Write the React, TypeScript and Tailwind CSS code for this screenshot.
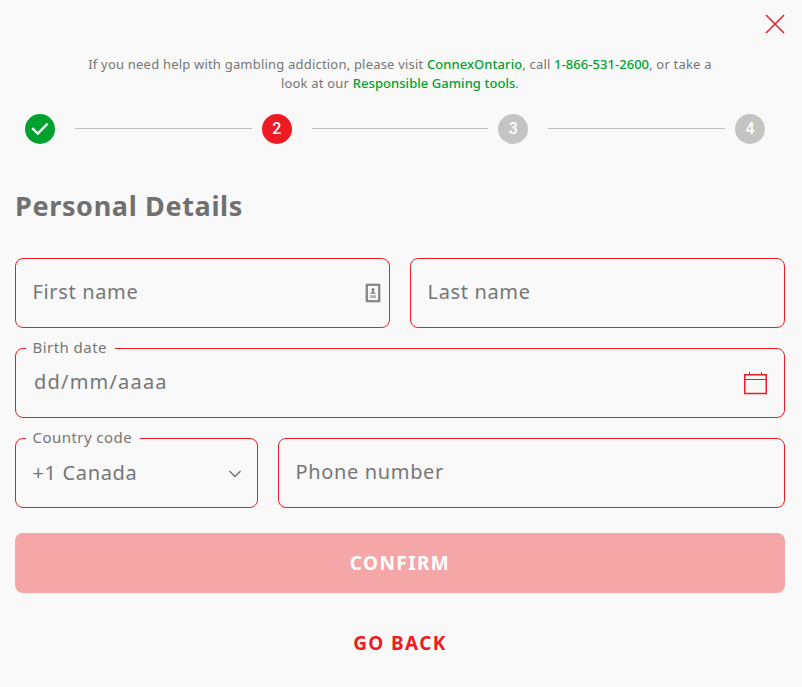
import { ReactNode } from 'react';

const Step = ({ color, children }: { color: string; children: ReactNode }) => {
  return (
    <div
      className={`flex h-[30px] w-[30px] shrink-0 items-center justify-center rounded-full text-white font-['Roboto',sans-serif] text-base font-medium ${color}`}
    >
      {children}
    </div>
  );
};

const StepLine = () => <div className="mb-px ml-5 mr-2.5 h-px flex-1 bg-[#bdbdbd]" />;

type FieldProps = {
  value: string;
  label?: string;
  className?: string;
  textClass?: string;
  icon?: ReactNode;
};

const Field = ({ value, label, className = '', textClass = '', icon }: FieldProps) => {
  return (
    <div
      className={`relative flex h-[70px] items-center justify-between rounded-lg border border-[#ed1c24] pl-[16.5px] text-xl leading-7 tracking-[0.65px] text-[#767676] ${className}`}
    >
      {label && (
        <span className="absolute -top-[13px] left-2.5 bg-[#f9f9f9] pl-[6.5px] pr-2 text-[15px] leading-[22px] tracking-[0.45px]">
          {label}
        </span>
      )}
      <span className={textClass}>{value}</span>
      {icon}
    </div>
  );
};

const ContactIcon = () => (
  <svg className="mr-2" width="16" height="20" viewBox="0 0 16 20" fill="none">
    <rect x="1" y="1" width="14" height="18" rx="1" stroke="#c4c4c4" strokeWidth="1.6" />
    <rect x="2" y="2" width="12" height="16" stroke="#808080" strokeWidth="1.8" />
    <circle cx="8" cy="6.3" r="1.4" fill="#8f8f8f" />
    <path d="M7 6h2v3l2.2 1.8H4.8L7 9z" fill="#808080" />
    <path d="M5 13.6h6" stroke="#b5b5b5" strokeWidth="3" />
  </svg>
);

const CalendarIcon = () => (
  <svg className="mr-4 mt-px" width="25" height="24" viewBox="0 0 25 24" fill="none" stroke="#ed1c24">
    <rect x="1.75" y="2.75" width="21.5" height="18.75" strokeWidth="1.5" />
    <path d="M1 7.5h23" />
    <path d="M6.5 0v2M18.5 0v2" />
  </svg>
);

const ChevronIcon = () => (
  <svg className="mr-[15px] mt-px" width="14" height="8" viewBox="0 0 14 8" fill="none" stroke="#707070" strokeWidth="1.4">
    <path d="M1.5 1L7 6.5 12.5 1" />
  </svg>
);

const HelpLink = ({ children }: { children: ReactNode }) => (
  <a className="font-medium tracking-[0.05px] text-[#00a12d]">{children}</a>
);

export default function App() {
  return (
    <div className="relative h-[687px] w-[802px] bg-[#f9f9f9] pl-[15px] pr-[17px] pt-[55px] font-['Noto_Sans',sans-serif] text-[#707070]">
      <button className="absolute right-[17px] top-[14px]" aria-label="Close">
        <svg width="20" height="20" viewBox="0 0 20 20" stroke="#ed1c24" strokeWidth="1.5">
          <path d="M1 1l18 18M19 1L1 19" />
        </svg>
      </button>

      <p className="mx-auto w-[660px] text-center text-[13px] leading-[19px] tracking-[0.2px] text-[#767676]">
        If you need help with gambling addiction, please visit <HelpLink>ConnexOntario</HelpLink>, call{' '}
        <HelpLink>1-866-531-2600</HelpLink>, or take a
        <br />
        look at our <HelpLink>Responsible Gaming tools</HelpLink>.
      </p>

      <div className="mt-[21px] flex items-center pl-2.5 pr-5">
        <Step color="bg-[#00a12d]">
          <svg width="18" height="14" viewBox="0 0 18 14" fill="none" stroke="white" strokeWidth="2.4">
            <path d="M1.2 6.2l5.6 5.3L16.6 1.7" />
          </svg>
        </Step>
        <StepLine />
        <Step color="bg-[#ed1c24]">2</Step>
        <StepLine />
        <Step color="bg-[#c4c4c4]">3</Step>
        <StepLine />
        <Step color="bg-[#c4c4c4]">4</Step>
      </div>

      <h1 className="mt-[42px] text-[27px] font-bold leading-10 tracking-[0.65px]">Personal Details</h1>

      <div className="mt-8 flex flex-col gap-5">
        <div className="flex gap-5">
          <Field value="First name" className="flex-1" textClass="-mt-0.5" icon={<ContactIcon />} />
          <Field value="Last name" className="flex-1" textClass="-mt-0.5" />
        </div>
        <Field
          label="Birth date"
          value="dd/mm/aaaa"
          textClass="-mt-0.5 ml-[1.5px] tracking-[1.2px]"
          icon={<CalendarIcon />}
        />
        <div className="flex gap-5">
          <Field
            label="Country code"
            value="+1 Canada"
            className="w-[243px]"
            icon={<ChevronIcon />}
          />
          <Field value="Phone number" className="flex-1" textClass="-mt-0.5" />
        </div>
      </div>

      <button className="mt-[25px] h-[60px] w-full rounded-lg bg-[#f5a7a7] text-[19px] font-bold tracking-[1.4px] text-white">
        CONFIRM
      </button>
      <button className="mt-5 h-[60px] w-full text-[19px] font-bold tracking-[1.4px] text-[#ed1c24]">
        GO BACK
      </button>
    </div>
  );
}
